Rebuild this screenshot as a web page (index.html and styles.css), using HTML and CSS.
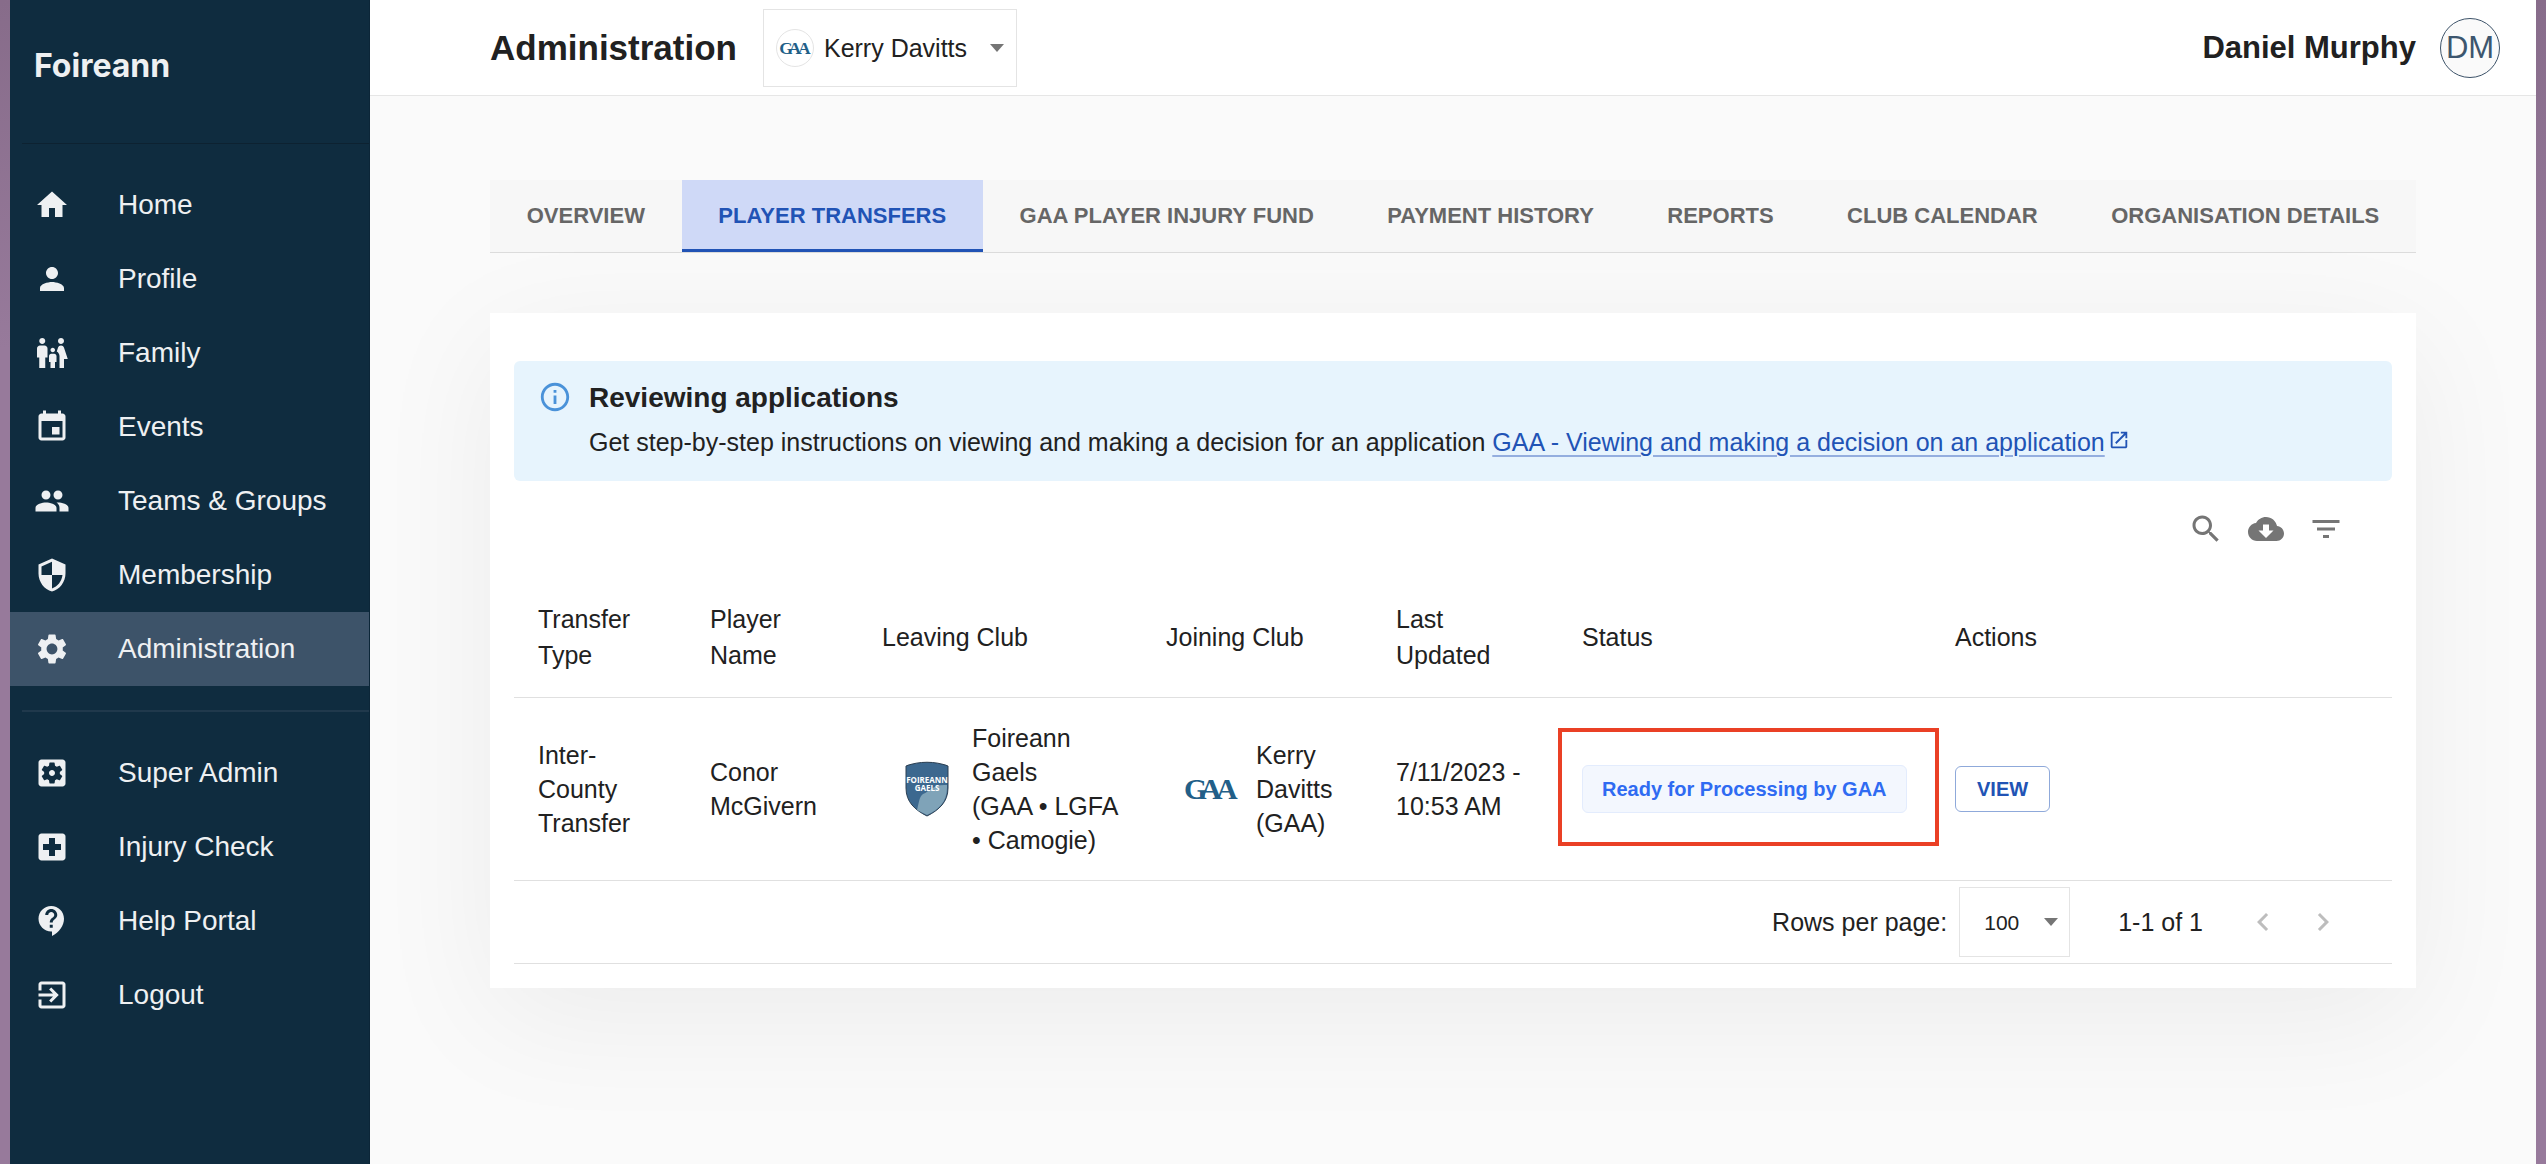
FILE: index.html
```html
<!DOCTYPE html>
<html lang="en">
<head>
    <meta charset="UTF-8">
    <meta name="viewport" content="width=device-width, initial-scale=1.0">
    <title>Foireann - Administration</title>
    <link rel="stylesheet" href="styles.css">
</head>
<body>
    <aside class="sidebar">
        <div class="brand">Foireann</div>
        <nav class="nav-group">
            <a class="nav-item" href="#home">
                <svg class="icon" viewBox="0 0 24 24"><path d="M10 20v-6h4v6h5v-8h3L12 3 2 12h3v8z"/></svg>
                Home
            </a>
            <a class="nav-item" href="#profile">
                <svg class="icon" viewBox="0 0 24 24"><path d="M12 12c2.21 0 4-1.79 4-4s-1.79-4-4-4-4 1.79-4 4 1.79 4 4 4zm0 2c-2.67 0-8 1.34-8 4v2h16v-2c0-2.66-5.33-4-8-4z"/></svg>
                Profile
            </a>
            <a class="nav-item" href="#family">
                <svg class="icon" viewBox="0 0 24 24"><path d="M16 4c0-1.11.89-2 2-2s2 .89 2 2-.89 2-2 2-2-.89-2-2zm4 18v-6h2.500l-2.540-7.630C19.680 7.550 18.920 7 18.060 7h-.12c-.86 0-1.630.550-1.900 1.370l-.86 2.580c1.080.600 1.820 1.730 1.820 3.050v8h3zm-7.500-10.500c.830 0 1.500-.670 1.500-1.500s-.670-1.500-1.500-1.500S11 9.170 11 10s.670 1.500 1.500 1.500zM5.500 6c1.110 0 2-.890 2-2s-.890-2-2-2-2 .890-2 2 .890 2 2 2zm2 16v-7H9V9c0-1.100-.900-2-2-2H4c-1.100 0-2 .900-2 2v6h1.500v7h4zm6.500 0v-4h1v-4c0-.820-.680-1.500-1.500-1.500h-2c-.820 0-1.500.680-1.500 1.500v4h1v4h3z"/></svg>
                Family
            </a>
            <a class="nav-item" href="#events">
                <svg class="icon" viewBox="0 0 24 24"><path d="M17 12h-5v5h5v-5zM16 1v2H8V1H6v2H5c-1.110 0-1.990.900-1.990 2L3 19c0 1.100.890 2 2 2h14c1.100 0 2-.900 2-2V5c0-1.100-.900-2-2-2h-1V1h-2zm3 18H5V8h14v11z"/></svg>
                Events
            </a>
            <a class="nav-item" href="#teams">
                <svg class="icon" viewBox="0 0 24 24"><path d="M16 11c1.660 0 2.990-1.340 2.990-3S17.660 5 16 5c-1.660 0-3 1.340-3 3s1.340 3 3 3zm-8 0c1.660 0 2.990-1.340 2.990-3S9.660 5 8 5C6.340 5 5 6.340 5 8s1.340 3 3 3zm0 2c-2.330 0-7 1.170-7 3.500V19h14v-2.500c0-2.330-4.670-3.500-7-3.500zm8 0c-.290 0-.620.020-.970.050 1.160.840 1.970 1.970 1.970 3.450V19h6v-2.500c0-2.330-4.670-3.500-7-3.500z"/></svg>
                Teams &amp; Groups
            </a>
            <a class="nav-item" href="#membership">
                <svg class="icon" viewBox="0 0 24 24"><path d="M12 1L3 5v6c0 5.550 3.840 10.740 9 12 5.160-1.260 9-6.450 9-12V5l-9-4zm0 10.990h7c-.530 4.120-3.280 7.790-7 8.940V12H5V6.300l7-3.110v8.800z"/></svg>
                Membership
            </a>
            <a class="nav-item active" href="#administration">
                <svg class="icon" viewBox="0 0 24 24"><path d="M19.140 12.940c.040-.300.060-.610.060-.940 0-.320-.020-.640-.070-.940l2.030-1.580c.180-.140.230-.410.120-.610l-1.920-3.320c-.120-.220-.370-.290-.590-.220l-2.390.960c-.500-.380-1.030-.700-1.620-.940l-.360-2.540c-.040-.240-.240-.410-.480-.410h-3.840c-.240 0-.430.170-.470.410l-.360 2.540c-.590.240-1.130.570-1.620.940l-2.390-.960c-.220-.080-.470 0-.590.220L2.740 8.870c-.120.210-.080.470.120.610l2.030 1.580c-.050.300-.090.630-.090.940s.020.640.070.940l-2.030 1.580c-.180.140-.230.410-.120.610l1.920 3.320c.120.220.370.290.590.220l2.390-.960c.500.380 1.030.700 1.620.940l.360 2.540c.050.240.240.410.480.410h3.840c.240 0 .440-.170.470-.410l.360-2.540c.590-.240 1.130-.560 1.620-.940l2.390.960c.220.080.470 0 .590-.220l1.920-3.320c.120-.220.070-.470-.120-.610l-2.010-1.580zM12 15.600c-1.980 0-3.600-1.620-3.600-3.600s1.620-3.600 3.600-3.600 3.600 1.620 3.600 3.600-1.620 3.600-3.600 3.600z"/></svg>
                Administration
            </a>
        </nav>
        <nav class="nav-group nav-group-secondary">
            <a class="nav-item" href="#super-admin">
                <svg class="icon" viewBox="0 0 24 24"><path d="M12 10c-1.100 0-2 .900-2 2s.900 2 2 2 2-.900 2-2-.900-2-2-2zm7-7H5c-1.110 0-2 .900-2 2v14c0 1.100.890 2 2 2h14c1.110 0 2-.900 2-2V5c0-1.100-.890-2-2-2zm-1.750 9c0 .230-.020.460-.050.680l1.480 1.160c.130.110.170.300.080.450l-1.400 2.420c-.090.150-.270.210-.430.150l-1.740-.700c-.360.280-.760.510-1.180.690l-.260 1.850c-.030.170-.180.300-.350.300h-2.800c-.170 0-.320-.130-.350-.290l-.260-1.850c-.430-.180-.820-.410-1.180-.690l-1.740.700c-.160.060-.340 0-.430-.150l-1.400-2.420c-.090-.150-.050-.340.080-.450l1.480-1.160c-.030-.230-.050-.460-.050-.690s.020-.460.050-.680l-1.480-1.160c-.130-.110-.170-.300-.080-.450l1.400-2.420c.090-.150.270-.210.430-.150l1.740.700c.360-.280.760-.510 1.180-.690l.260-1.850c.030-.170.180-.300.350-.300h2.800c.170 0 .320.130.350.290l.260 1.850c.430.180.820.410 1.180.690l1.740-.700c.160-.060.340 0 .430.150l1.400 2.420c.090.150.050.340-.080.450l-1.480 1.160c.030.230.050.460.050.690z"/></svg>
                Super Admin
            </a>
            <a class="nav-item" href="#injury-check">
                <svg class="icon" viewBox="0 0 24 24"><path d="M19 3H5c-1.100 0-1.990.900-1.990 2L3 19c0 1.100.900 2 2 2h14c1.100 0 2-.900 2-2V5c0-1.100-.900-2-2-2zm-1 11h-4v4h-4v-4H6v-4h4V6h4v4h4v4z"/></svg>
                Injury Check
            </a>
            <a class="nav-item" href="#help">
                <svg class="icon" viewBox="0 0 24 24"><path d="M11.500 2C6.810 2 3 5.810 3 10.500S6.810 19 11.500 19h.500v3c4.860-2.340 8-7 8-11.500C20 5.810 16.190 2 11.500 2zm1 14.500h-2v-2h2v2zm0-3.500h-2c0-3.250 3-3 3-5 0-1.100-.900-2-2-2s-2 .900-2 2h-2c0-2.210 1.790-4 4-4s4 1.790 4 4c0 2.500-3 2.750-3 5z"/></svg>
                Help Portal
            </a>
            <a class="nav-item" href="#logout">
                <svg class="icon" viewBox="0 0 24 24"><path d="M10.090 15.590L11.500 17l5-5-5-5-1.410 1.410L12.670 11H3v2h9.670l-2.580 2.590zM19 3H5c-1.110 0-2 .900-2 2v4h2V5h14v14H5v-4H3v4c0 1.100.890 2 2 2h14c1.100 0 2-.900 2-2V5c0-1.100-.900-2-2-2z"/></svg>
                Logout
            </a>
        </nav>
    </aside>

    <div class="page">
        <header class="topbar">
            <h1 class="page-title">Administration</h1>
            <div class="club-select">
                <span class="club-avatar">
                    <svg class="gaa-logo" viewBox="0 0 54 24"><text y="22" x="0 16 32">GAA</text></svg>
                </span>
                <select aria-label="Club">
                    <option>Kerry Davitts</option>
                </select>
                <svg class="arrow" viewBox="0 0 14 8"><path d="M0 0h14L7 8z"/></svg>
            </div>
            <div class="user">
                <span class="user-name">Daniel Murphy</span>
                <span class="user-avatar">DM</span>
            </div>
        </header>

        <main class="content">
            <nav class="tabs">
                <a class="tab" href="#overview">OVERVIEW</a>
                <a class="tab active" href="#transfers">PLAYER TRANSFERS</a>
                <a class="tab" href="#injury-fund">GAA PLAYER INJURY FUND</a>
                <a class="tab" href="#payments">PAYMENT HISTORY</a>
                <a class="tab" href="#reports">REPORTS</a>
                <a class="tab" href="#calendar">CLUB CALENDAR</a>
                <a class="tab" href="#organisation">ORGANISATION DETAILS</a>
            </nav>

            <section class="card">
                <div class="alert">
                    <svg class="alert-icon" viewBox="0 0 24 24"><path d="M11 7h2v2h-2zm0 4h2v6h-2zm1-9C6.480 2 2 6.480 2 12s4.480 10 10 10 10-4.480 10-10S17.520 2 12 2zm0 18c-4.410 0-8-3.590-8-8s3.590-8 8-8 8 3.590 8 8-3.590 8-8 8z"/></svg>
                    <div>
                        <h2 class="alert-title">Reviewing applications</h2>
                        <p class="alert-text">Get step-by-step instructions on viewing and making a decision for an application <a class="alert-link" href="#guide">GAA - Viewing and making a decision on an application</a><svg class="external" viewBox="0 0 24 24"><path d="M19 19H5V5h7V3H5c-1.110 0-2 .900-2 2v14c0 1.100.890 2 2 2h14c1.100 0 2-.900 2-2v-7h-2v7zM14 3v2h3.590l-9.830 9.830 1.410 1.410L19 6.410V10h2V3h-7z"/></svg></p>
                    </div>
                </div>

                <div class="toolbar">
                    <button class="icon-btn" aria-label="Search"><svg class="icon" viewBox="0 0 24 24"><path d="M15.500 14h-.790l-.280-.270C15.410 12.590 16 11.110 16 9.500 16 5.910 13.090 3 9.500 3S3 5.910 3 9.500 5.910 16 9.500 16c1.610 0 3.090-.590 4.230-1.570l.270.280v.790l5 4.990L20.490 19l-4.990-5zm-6 0C7.010 14 5 11.990 5 9.500S7.010 5 9.500 5 14 7.010 14 9.500 11.990 14 9.500 14z"/></svg></button>
                    <button class="icon-btn" aria-label="Download CSV"><svg class="icon" viewBox="0 0 24 24"><path d="M19.350 10.040C18.670 6.590 15.640 4 12 4 9.110 4 6.600 5.640 5.350 8.040 2.340 8.360 0 10.910 0 14c0 3.310 2.690 6 6 6h13c2.760 0 5-2.240 5-5 0-2.640-2.050-4.780-4.650-4.960zM17 13l-5 5-5-5h3V9h4v4h3z"/></svg></button>
                    <button class="icon-btn" aria-label="Filter table"><svg class="icon" viewBox="0 0 24 24"><path d="M10 18h4v-2h-4v2zM3 6v2h18V6H3zm3 7h12v-2H6v2z"/></svg></button>
                </div>

                <table class="transfers">
                    <colgroup>
                        <col class="col-type">
                        <col class="col-player">
                        <col class="col-leaving">
                        <col class="col-joining">
                        <col class="col-updated">
                        <col class="col-status">
                        <col>
                    </colgroup>
                    <thead>
                        <tr>
                            <th>Transfer Type</th>
                            <th>Player Name</th>
                            <th>Leaving Club</th>
                            <th>Joining Club</th>
                            <th>Last Updated</th>
                            <th>Status</th>
                            <th>Actions</th>
                        </tr>
                    </thead>
                    <tbody>
                        <tr>
                            <td>Inter-County Transfer</td>
                            <td>Conor McGivern</td>
                            <td>
                                <div class="club">
                                    <span class="club-crest">
                                        <svg class="shield" viewBox="0 0 44 56">
                                            <path class="shield-base" d="M1 5C14 0 30 0 43 5V27C43 41 34 49 22 55C10 49 1 41 1 27Z"/>
                                            <path class="shield-wave" d="M42 24C28 23 25 30 18 33C14 36 14 42 12 49L22 54C33 49 42 41 42 27Z"/>
                                            <text x="22" y="22">FOIREANN</text>
                                            <text x="22" y="30">GAELS</text>
                                        </svg>
                                    </span>
                                    <span>Foireann Gaels<br>(GAA • LGFA • Camogie)</span>
                                </div>
                            </td>
                            <td>
                                <div class="club">
                                    <span class="club-crest">
                                        <svg class="gaa-logo" viewBox="0 0 54 24"><text y="22" x="0 16 32">GAA</text></svg>
                                    </span>
                                    <span>Kerry Davitts (GAA)</span>
                                </div>
                            </td>
                            <td>7/11/2023 - 10:53 AM</td>
                            <td class="status-cell"><span class="chip">Ready for Processing by GAA</span></td>
                            <td><button class="view-btn">VIEW</button></td>
                        </tr>
                    </tbody>
                </table>

                <div class="pagination">
                    <label for="rows">Rows per page:</label>
                    <div class="rows-select">
                        <select id="rows">
                            <option>100</option>
                        </select>
                        <svg class="arrow" viewBox="0 0 14 8"><path d="M0 0h14L7 8z"/></svg>
                    </div>
                    <span class="range">1-1 of 1</span>
                    <button class="icon-btn" aria-label="Previous page" disabled><svg class="icon" viewBox="0 0 24 24"><path d="M15.410 7.410L14 6l-6 6 6 6 1.410-1.410L10.830 12z"/></svg></button>
                    <button class="icon-btn" aria-label="Next page" disabled><svg class="icon" viewBox="0 0 24 24"><path d="M10 6L8.590 7.410 13.170 12l-4.580 4.590L10 18l6-6z"/></svg></button>
                </div>
            </section>
        </main>
    </div>
</body>
</html>
```

FILE: styles.css
```css
* {
    margin: 0;
    padding: 0;
    box-sizing: border-box;
    font-family: "Liberation Sans", Arial, sans-serif;
}

body {
    display: flex;
    min-height: 100vh;
    padding: 0 10px;
    font-size: 25px;
    line-height: 34px;
    color: #212121;
    background: linear-gradient(#876c8a, #977a9b 30%, #977a9b);
}

a {
    color: inherit;
    text-decoration: none;
}

.icon {
    display: block;
    flex-shrink: 0;
    width: 36px;
    height: 36px;
    fill: currentColor;
}

/* Sidebar */
.sidebar {
    flex: 0 0 360px;
    background: #0f2c3f;
    color: #eef0f2;
    border-right: 1px solid #0c2638;
}

.brand {
    display: flex;
    align-items: center;
    height: 144px;
    margin-left: 12px;
    padding: 0 12px 12px;
    border-bottom: 1px solid #0d2231;
    font-family: Inter, sans-serif;
    font-size: 32px;
    font-weight: 700;
}

.nav-group {
    padding: 24px 0;
}

.nav-group-secondary::before {
    content: "";
    display: block;
    height: 2px;
    margin: -24px 0 24px 12px;
    background: #20394c;
}

.nav-item {
    display: flex;
    align-items: center;
    gap: 48px;
    height: 74px;
    padding-left: 24px;
    font-size: 28px;
    white-space: nowrap;
}

.nav-item.active {
    background: #3d5369;
}

/* Top bar */
.page {
    flex: 1;
    min-width: 0;
    overflow: hidden;
    background: #fafafa;
}

.topbar {
    display: flex;
    align-items: center;
    height: 96px;
    padding: 0 36px 0 120px;
    background: #fff;
    border-bottom: 1px solid #e6e6e6;
}

.page-title {
    font-size: 35px;
    margin-right: 26px;
}

select {
    appearance: none;
    border: none;
    background: none;
    color: inherit;
    outline: none;
}

.arrow {
    width: 14px;
    height: 8px;
    fill: #757575;
    pointer-events: none;
}

.club-select {
    display: flex;
    align-items: center;
    height: 78px;
    padding: 0 12px;
    border: 1px solid #e4e4e4;
}

.club-select select {
    margin: 0 22px 0 10px;
    font-size: 25px;
}

.club-avatar {
    display: flex;
    align-items: center;
    justify-content: center;
    width: 38px;
    height: 38px;
    border: 1px solid #e4e4e4;
    border-radius: 50%;
}

.club-avatar .gaa-logo {
    width: 32px;
    height: 14px;
}

.gaa-logo {
    width: 54px;
    height: 24px;
    overflow: visible;
    fill: #225f88;
}

.gaa-logo text {
    font-family: "Liberation Serif", serif;
    font-size: 30px;
    font-weight: 700;
}

.user {
    display: flex;
    align-items: center;
    gap: 24px;
    margin-left: auto;
}

.user-name {
    font-size: 31px;
    font-weight: 700;
}

.user-avatar {
    display: flex;
    align-items: center;
    justify-content: center;
    width: 60px;
    height: 60px;
    border: 1px solid #3d5369;
    border-radius: 50%;
    background: #fafafa;
    color: #3d566e;
    font-size: 31px;
}

/* Tabs */
.content {
    padding: 84px 120px 96px;
}

.tabs {
    display: flex;
    background: #f7f7f7;
    border-bottom: 1px solid #dcdcdc;
}

.tab {
    flex: 1 1 auto;
    height: 72px;
    padding: 0 24px;
    border-bottom: 3px solid transparent;
    color: #666;
    font-size: 22px;
    font-weight: 700;
    line-height: 71px;
    text-align: center;
    white-space: nowrap;
}

.tab.active {
    background: #cfd9f7;
    border-bottom-color: #2153b5;
    color: #2153b5;
}

/* Card */
.card {
    margin-top: 60px;
    padding: 48px 24px 24px;
    background: #fff;
    box-shadow: 0 30px 120px rgba(0, 0, 0, 0.06);
}

.alert {
    display: flex;
    gap: 17px;
    padding: 19px 24px 21px;
    border-radius: 6px;
    background: #e7f4fd;
}

.alert-icon {
    flex-shrink: 0;
    width: 34px;
    height: 34px;
    fill: #4a92d9;
}

.alert-title {
    font-size: 28px;
    line-height: 36px;
}

.alert-text {
    margin-top: 8px;
    line-height: 36px;
}

.alert-link {
    color: #2153b5;
    text-decoration: underline #94aedf 2px;
    text-underline-offset: 4px;
}

.external {
    width: 22px;
    height: 22px;
    margin-left: 3px;
    fill: #2153b5;
}

.toolbar {
    display: flex;
    justify-content: flex-end;
    padding: 18px 36px;
}

.icon-btn {
    padding: 12px;
    border: none;
    background: none;
    color: #757575;
    cursor: pointer;
}

.icon-btn:disabled {
    color: #bdbdbd;
    cursor: default;
}

/* Transfers table */
.transfers {
    width: 100%;
    table-layout: fixed;
    border-collapse: collapse;
}

.col-type,
.col-player {
    width: 172px;
}

.col-leaving {
    width: 284px;
}

.col-joining {
    width: 230px;
}

.col-updated {
    width: 186px;
}

.col-status {
    width: 373px;
}

.transfers th,
.transfers td {
    padding: 24px;
    border-bottom: 1px solid #e0e0e0;
    text-align: left;
    vertical-align: middle;
}

.transfers th {
    font-weight: 400;
    line-height: 36px;
}

.transfers td {
    padding: 23px 24px;
}

.club {
    display: flex;
    align-items: center;
    margin-right: -12px;
}

.club-crest {
    display: flex;
    flex: 0 0 90px;
    justify-content: center;
}

.shield {
    width: 44px;
    height: 56px;
}

.shield-base {
    fill: #3c688f;
    stroke: #2b3f52;
}

.shield-wave {
    fill: #7fa3b8;
}

.shield text {
    fill: #fff;
    font-family: "Open Sans", sans-serif;
    font-size: 8px;
    font-weight: 700;
    text-anchor: middle;
}

.status-cell {
    position: relative;
}

/* Red frame round the status */
.status-cell::after {
    content: "";
    position: absolute;
    inset: 30px -8px 34px 0;
    border: 4px solid #ea4025;
    pointer-events: none;
}

.chip {
    display: inline-flex;
    align-items: center;
    height: 48px;
    padding: 0 19px;
    border: 1px solid #e3ecfd;
    border-radius: 6px;
    background: #f3f7fe;
    color: #2f6bf2;
    font-size: 20px;
    font-weight: 700;
    white-space: nowrap;
}

.view-btn {
    height: 46px;
    padding: 0 21px;
    border: 1px solid #8fa9da;
    border-radius: 6px;
    background: #fff;
    color: #2153b5;
    font-size: 20px;
    font-weight: 700;
    cursor: pointer;
}

.pagination {
    display: flex;
    align-items: center;
    justify-content: flex-end;
    padding: 6px 39px;
    border-bottom: 1px solid #e0e0e0;
}

.rows-select {
    display: flex;
    align-items: center;
    height: 70px;
    margin: 0 48px 0 12px;
    padding: 0 11px 0 24px;
    border: 1px solid #e4e4e4;
}

.rows-select select {
    margin-right: 24px;
    font-size: 21px;
}

.range {
    margin-right: 30px;
}
```
